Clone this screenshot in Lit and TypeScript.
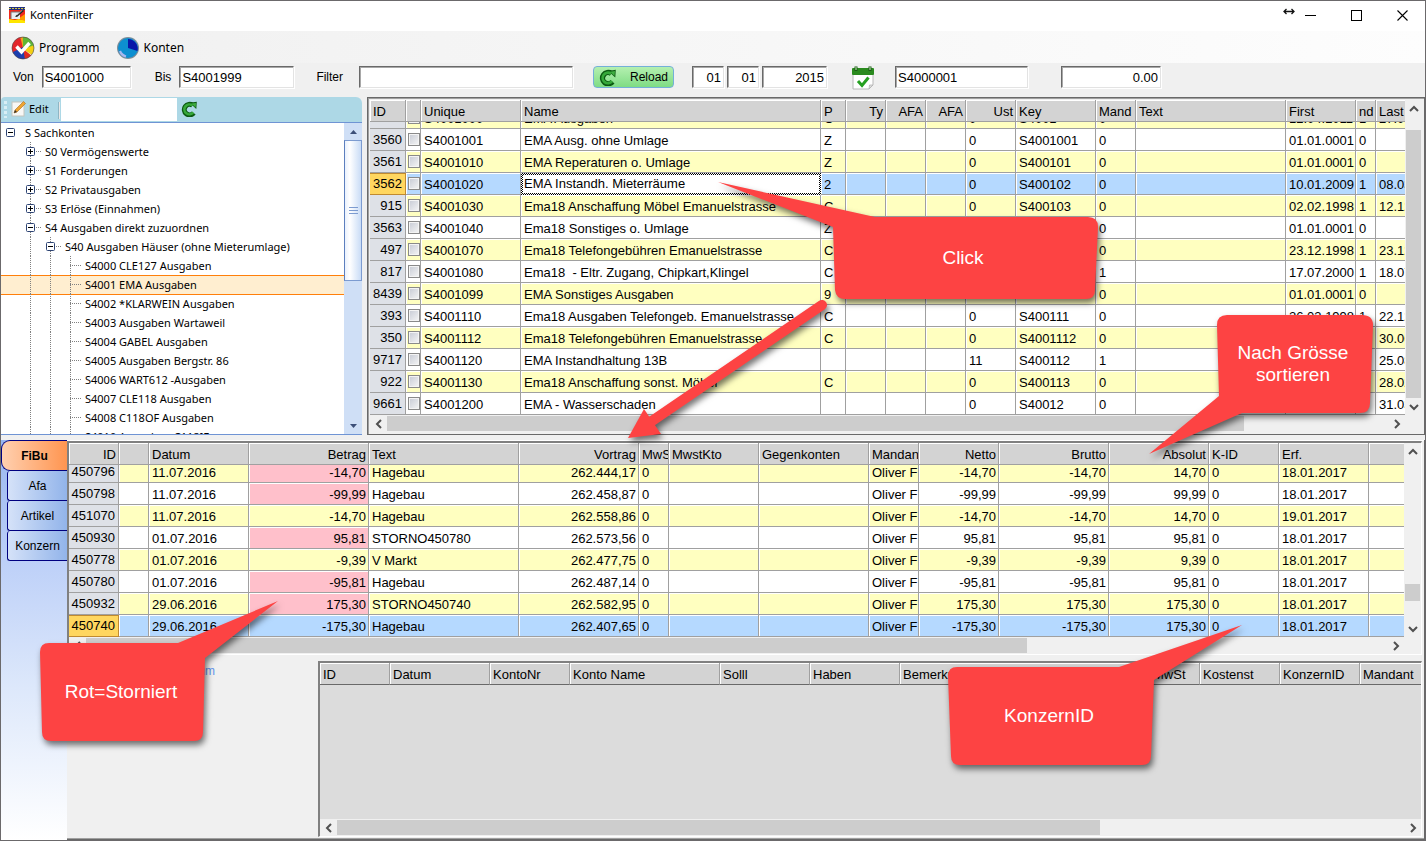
import { LitElement, html, css, svg, nothing } from "lit";
import { customElement, property } from "lit/decorators.js";
import { classMap } from "lit/directives/class-map.js";
import { styleMap } from "lit/directives/style-map.js";

interface Column {
  title: string;
  width: number;
  align?: "right";
  headAlign?: "right";
  kind?: "id" | "check";
}
interface Row {
  cells: string[];
  current?: boolean;
  focus?: number;
  pink?: number;
}

const c = (title: string, width: number, extra: Partial<Column> = {}): Column => ({ title, width, ...extra });
const R = { align: "right", headAlign: "right" } as const;

const accountColumns: Column[] = [
  c("ID", 36, { kind: "id", align: "right" }), c("", 15, { kind: "check" }), c("Unique", 100), c("Name", 300), c("P", 25),
  c("Ty", 40, R), c("AFA", 40, R), c("AFA", 40, R), c("Ust", 50, { headAlign: "right" }), c("Key", 80),
  c("Mand", 40), c("Text", 150), c("First", 70), c("nd", 20), c("Last", 29),
];

const account = (id: string, unique: string, name: string, p: string, ust: string, key: string, mand: string, first: string, nd: string, last = "", extra: Partial<Row> = {}): Row =>
  ({ cells: [id, "", unique, name, p, "", "", "", ust, key, mand, "", first, nd, last], ...extra });

const accountRows: Row[] = [
  account("3559", "S4001000", "EMA Ausgaben", "C", "0", "S4001", "0", "12.04.2011", "1", "27.03.2012"),
  account("3560", "S4001001", "EMA Ausg. ohne Umlage", "Z", "0", "S4001001", "0", "01.01.0001", "0"),
  account("3561", "S4001010", "EMA Reperaturen o. Umlage", "Z", "0", "S400101", "0", "01.01.0001", "0"),
  account("3562", "S4001020", "EMA Instandh. Mieterräume", "2", "0", "S400102", "0", "10.01.2009", "1", "08.03.2012", { current: true, focus: 3 }),
  account("915", "S4001030", "Ema18 Anschaffung Möbel Emanuelstrasse", "C", "0", "S400103", "0", "02.02.1998", "1", "12.12.2011"),
  account("3563", "S4001040", "Ema18 Sonstiges o. Umlage", "Z", "0", "S400104", "0", "01.01.0001", "0"),
  account("497", "S4001070", "Ema18 Telefongebühren Emanuelstrasse", "C", "0", "S400107", "0", "23.12.1998", "1", "23.12.2011"),
  account("817", "S4001080", "Ema18  - Eltr. Zugang, Chipkart,Klingel", "C", "0", "S400108", "1", "17.07.2000", "1", "18.07.2011"),
  account("8439", "S4001099", "EMA Sonstiges Ausgaben", "9", "0", "S400109", "0", "01.01.0001", "0"),
  account("393", "S4001110", "Ema18 Ausgaben Telefongeb. Emanuelstrasse", "C", "0", "S400111", "0", "26.03.1998", "1", "22.12.2011"),
  account("350", "S4001112", "Ema18 Telefongebühren Emanuelstrasse", "C", "0", "S4001112", "0", "26.03.1998", "1", "30.06.2011"),
  account("9717", "S4001120", "EMA Instandhaltung 13B", "", "11", "S400112", "1", "26.03.2008", "1", "25.08.2011"),
  account("922", "S4001130", "Ema18 Anschaffung sonst. Möbel", "C", "0", "S400113", "0", "26.03.1998", "1", "28.02.2011"),
  account("9661", "S4001200", "EMA - Wasserschaden", "", "0", "S40012", "0", "26.03.2008", "1", "31.03.2011"),
];

const bookingColumns: Column[] = [
  c("ID", 50, { kind: "id", ...R }), c("", 30), c("Datum", 100), c("Betrag", 120, R), c("Text", 150), c("Vortrag", 120, R),
  c("MwSt", 30), c("MwstKto", 90), c("Gegenkonten", 110), c("Mandant", 50), c("Netto", 80, R), c("Brutto", 110, R),
  c("Absolut", 100, R), c("K-ID", 70), c("Erf.", 90), c("", 36),
];

const booking = (id: string, date: string, amount: string, text: string, carry: string, erf = "18.01.2017", extra: Partial<Row> = { pink: 3 }): Row =>
  ({ cells: [id, "", date, amount, text, carry, "0", "", "", "Oliver F", amount, amount, amount.replace("-", ""), "0", erf, ""], ...extra });

const bookingRows: Row[] = [
  booking("450796", "11.07.2016", "-14,70", "Hagebau", "262.444,17"),
  booking("450798", "11.07.2016", "-99,99", "Hagebau", "262.458,87"),
  booking("451070", "11.07.2016", "-14,70", "Hagebau", "262.558,86", "19.01.2017", {}),
  booking("450930", "01.07.2016", "95,81", "STORNO450780", "262.573,56"),
  booking("450778", "01.07.2016", "-9,39", "V Markt", "262.477,75", "18.01.2017", {}),
  booking("450780", "01.07.2016", "-95,81", "Hagebau", "262.487,14"),
  booking("450932", "29.06.2016", "175,30", "STORNO450740", "262.582,95"),
  booking("450740", "29.06.2016", "-175,30", "Hagebau", "262.407,65", "18.01.2017", { current: true }),
];

const detailColumns: Column[] = [
  c("ID", 70), c("Datum", 100), c("KontoNr", 80), c("Konto Name", 150), c("Solll", 90), c("Haben", 90),
  c("Bemerkung", 250), c("MwSt", 50), c("Kostenst", 80), c("KonzernID", 80), c("Mandant", 60),
];

const chevrons: Record<string, string> = {
  up: "M4 10 L8 6 L12 10", down: "M4 6 L8 10 L12 6", left: "M10 4 L6 8 L10 12", right: "M6 4 L10 8 L6 12",
};

/** Flat scroll bar; before / size / after are the shares of the track. */
@customElement("scroll-bar")
class ScrollBar extends LitElement {
  @property({ type: Boolean, reflect: true }) vertical = false;
  @property({ type: Number }) before = 0;
  @property({ type: Number }) size = 1;
  @property({ type: Number }) after = 0;

  static styles = css`
    :host { display: flex; background: #f0f0f0; min-width: 0; min-height: 0; }
    :host([vertical]) { flex-direction: column; width: 17px; }
    :host(:not([vertical])) { height: 17px; }
    .arrow { flex: none; width: 17px; height: 17px; border: 0; padding: 0; background: none; display: grid; place-items: center; }
    .arrow svg { width: 16px; height: 16px; display: block; }
    .thumb { background: #cdcdcd; margin: 1px 0; }
    :host([vertical]) .thumb { margin: 0 1px; }
  `;
  arrow(dir: string) {
    return html`<button class="arrow" type="button" tabindex="-1" aria-label="Scroll ${dir}">
      <svg viewBox="0 0 16 16"><path d=${chevrons[dir]} fill="none" stroke="#505050" stroke-width="2" /></svg></button>`;
  }
  render() {
    const part = (n: number) => styleMap({ flexGrow: String(n), flexBasis: "0" });
    return html`${this.arrow(this.vertical ? "up" : "left")}
      <div style=${part(this.before)}></div><div class="thumb" style=${part(this.size)}></div><div style=${part(this.after)}></div>
      ${this.arrow(this.vertical ? "down" : "right")}`;
  }
}

@customElement("data-grid")
class DataGrid extends LitElement {
  @property({ attribute: false }) columns: Column[] = [];
  @property({ attribute: false }) rows: Row[] = [];
  @property({ attribute: false }) v: number[] | null = null;
  @property({ attribute: false }) h: number[] = [0, 1, 0];
  @property() label = "";

  static styles = css`
    :host { display: grid; grid-template: minmax(0, 1fr) 17px / minmax(0, 1fr) auto; min-height: 0; min-width: 0; background: #f0f0f0;
      font: 13px/20px "Liberation Sans", Arial, sans-serif; color: #000; }
    table { display: flex; flex-direction: column; min-height: 0; overflow: hidden; background: #dcdcdc; }
    thead { display: block; flex: none; }
    tbody { display: flex; flex-direction: column; justify-content: flex-end; flex: 1; min-height: 0; overflow: hidden; }
    tr { display: grid; flex: none; height: 22px; }
    th, td { display: block; min-width: 0; overflow: hidden; white-space: pre; padding: 2px 2px 0 3px; font-weight: normal; text-align: left;
      border-right: 1px solid #a0a0a0; border-bottom: 1px solid #a0a0a0; box-shadow: inset 1px 1px #fff; }
    th { background: #d3d3d3; }
    th:last-child, td:last-child { border-right: 0; }
    .right { text-align: right; }
    .row td { background: #fff; }
    .row.odd td { background: #ffffc0; }
    .row.current td { background: #b5d9ff; }
    .row td.pink { background: #ffc0cb; }
    .row td.id { background: #dee1e7; padding: 1px 3px 0 2px; box-shadow: none; }
    .row.current td.id { background: #ffd65f; border-color: #c08a30; box-shadow: inset 0 1px #c08a30; }
    .row td.check { padding: 4px 0 0 2px; line-height: 0; }
    .row td.focus { padding: 0 2px 0 1px; border: 2px solid transparent; box-shadow: none; line-height: 18px;
      background: linear-gradient(#fff, #fff) padding-box, repeating-conic-gradient(#000 0 25%, #fff 0 50%) 0 0 / 2px 2px border-box; }
    .tick { appearance: none; box-sizing: border-box; margin: 0; width: 12px; height: 13px; border: 1px solid #8a8a8a;
      box-shadow: inset 0 0 0 1px #f4f4f4; background: linear-gradient(135deg, #c6cad4, #f6f6f6); }
    .empty th { border-bottom-color: #696969; }
    .h { grid-row: 2; grid-column: 1; }
  `;
  render() {
    const cols = this.columns.map((x, i) => (i === this.columns.length - 1 ? `minmax(${x.width}px, 1fr)` : `${x.width}px`)).join(" ");
    const tpl = styleMap({ gridTemplateColumns: cols });
    return html`<table class=${classMap({ empty: !this.rows.length })} aria-label=${this.label}>
        <thead><tr style=${tpl}>${this.columns.map((x) => html`<th scope="col" class=${x.headAlign ?? ""}>${x.title}</th>`)}</tr></thead>
        <tbody>${this.rows.map((r, n) => html`<tr style=${tpl} class=${classMap({ row: true, odd: n % 2 === 0, current: !!r.current })}>
          ${r.cells.map((t, i) => {
            const col = this.columns[i];
            const cls = classMap({ id: col.kind === "id", check: col.kind === "check", right: col.align === "right", focus: r.focus === i, pink: r.pink === i });
            return col.kind === "check"
              ? html`<td class=${cls}><input class="tick" type="checkbox" aria-label=${"Konto " + r.cells[2]}></td>`
              : html`<td class=${cls}>${t}</td>`;
          })}</tr>`)}</tbody>
      </table>
      ${this.v ? html`<scroll-bar vertical .before=${this.v[0]} .size=${this.v[1]} .after=${this.v[2]}></scroll-bar>` : nothing}
      <scroll-bar class="h" .before=${this.h[0]} .size=${this.h[1]} .after=${this.h[2]}></scroll-bar>`;
  }
}

interface Node { level: number; text: string; open?: boolean; closed?: boolean; selected?: boolean }
const n = (level: number, text: string, extra: Partial<Node> = {}): Node => ({ level, text, ...extra });
const nodes: Node[] = [
  n(0, "S Sachkonten", { open: true }),
  n(1, "S0 Vermögenswerte", { closed: true }), n(1, "S1 Forderungen", { closed: true }),
  n(1, "S2 Privatausgaben", { closed: true }), n(1, "S3 Erlöse (Einnahmen)", { closed: true }),
  n(1, "S4 Ausgaben direkt zuzuordnen", { open: true }),
  n(2, "S40 Ausgaben Häuser (ohne Mieterumlage)", { open: true }),
  n(3, "S4000 CLE127 Ausgaben"), n(3, "S4001 EMA Ausgaben", { selected: true }), n(3, "S4002 *KLARWEIN Ausgaben"),
  n(3, "S4003 Ausgaben Wartaweil"), n(3, "S4004 GABEL Ausgaben"), n(3, "S4005 Ausgaben Bergstr. 86"),
  n(3, "S4006 WART612 -Ausgaben"), n(3, "S4007 CLE118 Ausgaben"), n(3, "S4008 C118OF Ausgaben"), n(3, "S4010 Ausgaben C118IF"),
];

@customElement("account-tree")
class AccountTree extends LitElement {
  static styles = css`
    :host { display: flex; min-height: 0; background: #fff; border-top: 1px solid #6f94d4; border-bottom: 1px solid #6f94d4;
      font: 11px/19px "Noto Sans", "Open Sans", sans-serif; color: #000; }
    ul { list-style: none; margin: 0; padding: 0; flex: 1; min-width: 0; overflow: hidden; }
    li { display: flex; height: 19px; white-space: nowrap; }
    .selected { background: #ffeed0; box-shadow: inset 0 1px #ff7f0a, 0 1px #ff7f0a; }
    .lines { flex: none; display: block; height: 19px; }
    .text { padding-left: 4px; }
    .bar { flex: none; width: 18px; display: flex; flex-direction: column; background: #cfdff6; box-sizing: border-box; }
    .arrow { border: 0; padding: 0; height: 17px; background: none; display: grid; place-items: center; }
    .thumb { flex-grow: 137; border: 1px solid #7c9bd0; border-left-color: #5c7fbe; background: linear-gradient(90deg, #e9f1fd, #fff 30%, #c9dcf6); display: grid; place-items: center; }
    .rest { flex-grow: 141; }
  `;
  lines(x: Node) {
    const w = (x.level + 1) * 20;
    const cx = x.level * 20 + 9;
    const dot = (d: string) => svg`<path d=${d} stroke="#808080" stroke-dasharray="1 1" fill="none"/>`;
    const out = [];
    for (let l = 1; l < x.level; l++) out.push(dot(`M${l * 20 + 9.5} 0V19`));
    if (x.level) out.push(dot(`M${cx + 0.5} 0V19`), dot(`M${cx} 9.5H${w}`));
    if (x.open || x.closed) {
      out.push(svg`<rect x=${cx - 4} y="5" width="9" height="9" fill="#fff"/><rect x=${cx - 3.5} y="5.5" width="8" height="8" rx="1" fill="#fff" stroke="#2d4373"/>
        <path d=${`M${cx - 2} 9.5h5` + (x.closed ? `M${cx + 0.5} 7v5` : "")} stroke="#000"/>`);
    }
    return html`<svg class="lines" width=${w} height="19" aria-hidden="true">${out}</svg>`;
  }
  render() {
    return html`<ul role="tree">${nodes.map((x) => html`<li role="treeitem" class=${classMap({ selected: !!x.selected })}>${this.lines(x)}<span class="text">${x.text}</span></li>`)}</ul>
      <div class="bar">
        <button class="arrow" aria-label="Nach oben"><svg width="9" height="6"><path d="M1 5 L4.500 1 L8 5Z" fill="#3c4f78"/></svg></button>
        <div class="thumb"><svg width="9" height="7"><path d="M0 .5H9M0 3.500H9M0 6.500H9" stroke="#7c9bd0"/></svg></div>
        <div class="rest"></div>
        <button class="arrow" aria-label="Nach unten"><svg width="9" height="6"><path d="M1 1 L4.500 5 L8 1Z" fill="#3c4f78"/></svg></button>
      </div>`;
  }
}

const reloadIcon = (size: number) => html`<svg width=${size} height=${size} viewBox="0 0 16 16" aria-hidden="true">
  <path d="M12.700 12 A5.300 5.300 0 1 1 11.600 4.200" fill="none" stroke="#0c5a12" stroke-width="5"/>
  <path d="M8.500 1.800 L15.800 0.800 L15.300 8 Z" fill="#0c5a12"/><path d="M10.400 2.600 L15 1.900 L14.600 6.500 Z" fill="#3fae42"/>
  <path d="M12.200 11.400 A4.900 4.900 0 1 1 11.300 4.500" fill="none" stroke="#36a83a" stroke-width="2.600"/></svg>`;

@customElement("app-root")
class AppRoot extends LitElement {
  static styles = css`
    :host { display: flex; flex-direction: column; position: relative; box-sizing: border-box; height: 100vh; min-height: 600px; overflow: hidden;
      border: 1px solid #6b696b; background: #f0f0f0; color: #000; font: 12px/16px "Liberation Sans", Arial, sans-serif; }
    svg { display: block; flex: none; }
    button { font: inherit; color: inherit; }
    .title { flex: none; height: 30px; box-sizing: border-box; display: flex; align-items: center; padding: 0 8px 2px; background: #fff; font: 11px/16px "Noto Sans", "Open Sans", sans-serif; }
    .title h1 { margin: 0 auto 0 5px; font: inherit; }
    .win { border: 0; background: none; padding: 0; width: 30px; height: 28px; display: grid; place-items: center; margin-left: 16px; }
    .win.first { margin-left: 0; }
    .resize { align-self: flex-start; margin-top: 5px; }
    .menu { flex: none; height: 32px; box-sizing: border-box; display: flex; align-items: center; gap: 16px; padding: 2px 0 0 10px; background: linear-gradient(90deg, #f0f0f0, #fdfdfd);
      font: 12px/16px "Noto Sans", "Open Sans", sans-serif; }
    .menu button { display: flex; align-items: center; gap: 4px; border: 0; background: none; padding: 0; }
    .filter { flex: none; height: 34px; box-sizing: border-box; padding: 3px 0 0 12px; display: flex; align-items: flex-start; }
    .filter label { line-height: 22px; }
    .field { box-sizing: border-box; height: 22px; padding: 0 2px; border: 1px solid; border-color: #696969 #e3e3e3 #e3e3e3 #696969; box-shadow: inset 1px 1px #a8a8a8, 1px 1px #fff;
      font: 13px/18px "Liberation Sans", Arial, sans-serif; color: #000; background: #fff; outline: 0; border-radius: 0; min-width: 0; }
    .von { width: 89px; margin: 0 24px 0 8px; }
    .bis { width: 115px; margin: 0 22px 0 8px; }
    .flt { width: 214px; margin: 0 20px 0 16px; }
    .num { text-align: right; }
    .d { width: 32px; margin-right: 3px; }
    .y { width: 65px; margin-right: 24px; }
    .konto { width: 133px; margin: 0 33px 0 20px; }
    .sum { width: 100px; }
    .reload { width: 81px; height: 22px; margin-right: 18px; box-sizing: border-box; display: flex; align-items: center; justify-content: space-between; padding: 0 5px;
      border: 1px solid #74b0d8; border-radius: 4px; background: linear-gradient(#b4f0b0, #7fdc84); }
    .body { flex: 1; min-height: 0; display: flex; flex-direction: column; gap: 5px; }
    .upper { flex: 338 1 0; min-height: 0; display: flex; gap: 5px; }
    .left { flex: none; width: 361px; display: flex; flex-direction: column; }
    .left account-tree { flex: 1; }
    .tools { flex: none; height: 25px; display: flex; align-items: stretch; background: #add8e6; border-radius: 4px 6px 0 0; font: 11px/16px "Noto Sans", "Open Sans", sans-serif; padding-left: 3px; box-sizing: border-box; }
    .grip { width: 3px; margin: 4px 4px 4px 0; background: repeating-linear-gradient(#d8eef5 0 3px, transparent 3px 5px); }
    .tools button { border: 0; background: none; padding: 0 0 2px; display: flex; align-items: center; gap: 3px; }
    .sep { width: 1px; margin: 5px 1px 3px 9px; background: #e8e8e8; border-left: 1px solid #8fb6c4; }
    .find { width: 116px; box-sizing: border-box; border: 0; padding: 0 2px; margin: 1px 4px 1px 0; background: #fff; outline: 0; }
    .frame { flex: 1; min-width: 0; display: grid; border: 1px solid #696969; padding: 2px; box-shadow: inset 1px 1px #a0a0a0; }
    .lower { flex: 400 1 0; min-height: 0; display: flex; }
    .tabs { flex: none; width: 66px; display: flex; flex-direction: column; align-items: flex-end; background: linear-gradient(#98b6ef, #bdd0f8 30%, #dde8fb 62%, #fff); }
    .tabs button { width: 60px; height: 30px; box-sizing: border-box; padding: 0; border: solid #000080; border-width: 0 0 1px 1px; border-radius: 3px 0 0 3px; background: linear-gradient(90deg, #d5e2f8, #92b4ea); }
    .tabs .on { width: 66px; height: 31px; border-width: 1px 0 1px 1px; border-radius: 9px 0 0 9px; font-weight: bold; background: linear-gradient(90deg, #ffd0b0, #ff9550); }
    .main { flex: 1; min-width: 0; display: flex; flex-direction: column; box-sizing: border-box; border: solid #696969; border-width: 0 1px 1px 0; box-shadow: inset 0 1px #fff, inset 0 -1px #a0a0a0; padding: 1px 2px 0 0; }
    .grid { border: solid #696969; border-width: 2px 1px 1px 2px; border-color: #808080 #fff #fff #808080; box-sizing: border-box; }
    .bookings { flex: 211 1 0; }
    .bottom { flex: 176 1 0; min-height: 0; display: flex; padding: 6px 0 2px; }
    .side { flex: none; width: 251px; box-sizing: border-box; padding: 2px 103px 0 0; text-align: right; }
    .side a { color: #6495ed; text-decoration: none; }
    .details { flex: 1; min-width: 0; }
    .notes { position: absolute; top: -1px; left: -1px; width: 1426px; height: 841px; pointer-events: none; overflow: visible; }
    .note { fill: #fd4343; filter: drop-shadow(2px 4px 3px rgba(0, 0, 0, 0.55)); }
    .shaft { fill: none; stroke: #fd4343; stroke-width: 10; stroke-linecap: round; }
    .says { fill: #fff; font: 19px "Liberation Sans", Arial, sans-serif; text-anchor: middle; }
  `;

  render() {
    return html`
      <header class="title">
        <svg width="16" height="16" viewBox="0 0 16 16"><rect width="16" height="16" fill="#ffe600"/><rect width="16" height="3" fill="#203080"/><path d="M0 1.500h16" stroke="#d8c840" stroke-dasharray="2 1"/>
          <path d="M0 3h16v9l-3 1-3-1-4 1-6-1z" fill="#f0281c"/><path d="M9 12l7-5v7l-3-1z" fill="#ff9a00"/><rect x="2" y="5" width="9" height="7" fill="#e8eef2"/><path d="M2 12V5h9" fill="none" stroke="#777"/><path d="M6 9.500 L13.500 2.500 L15 4 L8 10Z" fill="#222"/><path d="M8 8 L13.500 3" stroke="#ddd" stroke-width=".7"/></svg>
        <h1>KontenFilter</h1>
        <svg class="resize" width="12" height="11" viewBox="0 0 12 11"><path d="M1 5.500H11M3.500 3L1 5.500L3.500 8M8.500 3L11 5.500L8.500 8" fill="none" stroke="#111" stroke-width="1.300"/></svg>
        <button class="win first" aria-label="Minimieren"><svg width="11" height="11"><path d="M0 5.500H11" stroke="#000"/></svg></button>
        <button class="win" aria-label="Maximieren"><svg width="11" height="11"><rect x=".5" y=".5" width="10" height="10" fill="none" stroke="#000"/></svg></button>
        <button class="win" aria-label="Schließen"><svg width="11" height="11"><path d="M.5 .5L10.500 10.500M10.500 .5L.5 10.500" stroke="#000" stroke-width="1.100"/></svg></button>
      </header>
      <nav class="menu">
        <button type="button"><svg width="24" height="24" viewBox="0 0 24 24"><defs><clipPath id="ball"><circle cx="12" cy="12" r="11"/></clipPath></defs>
          <g clip-path="url(#ball)"><path d="M0 0H12V12L0 19Z" fill="#e3262b"/><path d="M9 0H18L12 12Z" fill="#f0a020"/><path d="M12 0L24 3V11L12 14Z" fill="#5fb536"/><path d="M24 9V21L12 13Z" fill="#f4d012"/><path d="M11 12L21 20L15 24H9Z" fill="#e02a20"/><path d="M0 17L12 11L14 24H2Z" fill="#1c3fae"/></g>
          <circle cx="12" cy="12" r="11" fill="none" stroke="#444" stroke-opacity=".6"/><path d="M5.500 10.500L10.500 16L18.500 7" fill="none" stroke="#fff" stroke-width="3.400"/></svg>Programm</button>
        <button type="button"><svg width="24" height="24" viewBox="0 0 24 24"><circle cx="12" cy="12" r="11" fill="#7d8d99"/><circle cx="12" cy="12" r="10" fill="#0d8fd0"/><path d="M12 3A9.800 9.800 0 0 1 21.500 15L12 12Z" fill="#0717a8"/><path d="M4 15A9 9 0 0 0 10 20.500" fill="none" stroke="#a9b8ef" stroke-width="2.200"/></svg>Konten</button>
      </nav>
      <form class="filter">
        <label for="von">Von</label><input id="von" class="field von" value="S4001000">
        <label for="bis">Bis</label><input id="bis" class="field bis" value="S4001999">
        <label for="flt">Filter</label><input id="flt" class="field flt">
        <button type="button" class="reload">${reloadIcon(17)}Reload</button>
        <input class="field num d" aria-label="Tag" value="01"><input class="field num d" aria-label="Monat" value="01"><input class="field num y" aria-label="Jahr" value="2015">
        <svg width="24" height="24" viewBox="0 0 24 24"><path d="M2 7H22V19L18 23H2Z" fill="#fff" stroke="#b8b8b8"/><path d="M18 23L18.500 19H22Z" fill="#ddd" stroke="#b0b0b0" stroke-width=".7"/><rect x="1" y="2" width="22" height="7" rx="1" fill="#2a8a1e"/><path d="M5 0.500V5M19 0.500V5" stroke="#1a5c14" stroke-width="3"/><path d="M5 1V4M19 1V4" stroke="#c8e8c0" stroke-width="1"/><path d="M7 15L11 19.500L17.500 11.500" fill="none" stroke="#25a020" stroke-width="3"/></svg>
        <input class="field konto" aria-label="Konto" value="S4000001"><input class="field num sum" aria-label="Summe" value="0.00">
      </form>
      <div class="body">
        <section class="upper">
          <div class="left">
            <div class="tools"><span class="grip"></span>
              <button type="button"><svg width="15" height="17" viewBox="0 0 15 17"><rect x="1" y="2" width="12" height="14" fill="#f7f7f5" stroke="#c4c4bc"/><path d="M3 13L4 10L12.500 1.500L14.500 3.500L6 12Z" fill="#efa531" stroke="#a86d1c" stroke-width=".6"/><path d="M3 13L4 10L6 12Z" fill="#333"/></svg>Edit</button>
              <span class="sep"></span><input class="find" aria-label="Suchen"><button type="button" aria-label="Neu laden">${reloadIcon(16)}</button></div>
            <account-tree></account-tree>
          </div>
          <div class="frame"><data-grid label="Konten" .columns=${accountColumns} .rows=${accountRows} .v=${[13, 268, 0]} .h=${[0, 858, 144]}></data-grid></div>
        </section>
        <section class="lower">
          <nav class="tabs"><button class="on">FiBu</button><button>Afa</button><button>Artikel</button><button>Konzern</button></nav>
          <div class="main">
            <data-grid class="grid bookings" label="Buchungen" .columns=${bookingColumns} .rows=${bookingRows} .v=${[124, 17, 19]} .h=${[0, 942, 360]}></data-grid>
            <div class="bottom"><div class="side"><a href="#datum">Datum</a></div>
              <data-grid class="grid details" label="Details" .columns=${detailColumns} .h=${[0, 763, 304]}></data-grid></div>
          </div>
        </section>
      </div>
      <svg class="notes" viewBox="0 0 1426 841">
        <g class="note"><path class="shaft" d="M822 305L652 421"/><path d="M628 438L644 409L661 434Z"/></g>
        <path class="note" d="M718 182L875 217H1088Q1098 217 1098 227L1095 290Q1095 299 1086 299H845Q836 299 835 290L833 227Z"/>
        <path class="note" d="M1227 315H1362Q1373 315 1373 325L1370 403Q1370 413 1360 413H1242L1149 454L1219 396L1217 325Q1217 315 1227 315Z"/>
        <path class="note" d="M49 643H178L278 601L205 658L203 732Q203 741 194 741H51Q42 741 42 732L40 652Q40 643 49 643Z"/>
        <path class="note" d="M957 667H1119L1242 625L1154 680L1151 756Q1151 765 1142 765H960Q951 765 951 756L948 676Q948 667 957 667Z"/>
        <text class="says" x="963" y="264">Click</text>
        <text class="says" x="1293" y="359">Nach Grösse</text><text class="says" x="1293" y="381">sortieren</text>
        <text class="says" x="121" y="698">Rot=Storniert</text><text class="says" x="1049" y="722">KonzernID</text>
      </svg>`;
  }
}
